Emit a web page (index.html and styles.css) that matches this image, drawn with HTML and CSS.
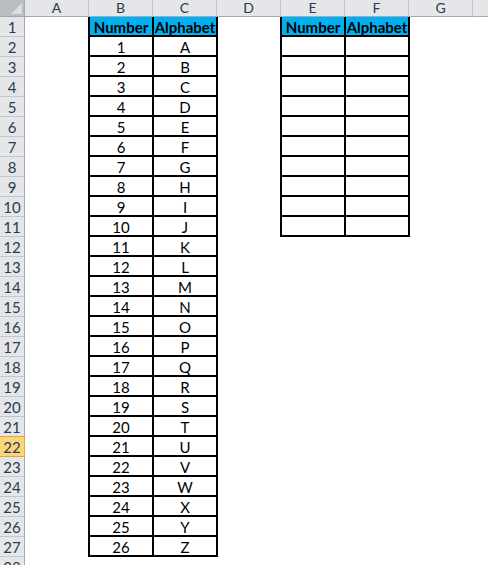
FILE: index.html
```html
<!DOCTYPE html>
<html>
<head>
<meta charset="utf-8">
<link rel="stylesheet" href="styles.css">
</head>
<body>
<div class="sheet">
  <div class="corner"><span class="tri"></span></div>
  <div class="ch">A</div><div class="ch">B</div><div class="ch">C</div><div class="ch">D</div><div class="ch">E</div><div class="ch">F</div><div class="ch">G</div><div class="ch"></div>

  <div class="rh r1">1</div><div class="rh r2">2</div><div class="rh r3">3</div><div class="rh r4">4</div><div class="rh r5">5</div><div class="rh r6">6</div><div class="rh r7">7</div><div class="rh r8">8</div><div class="rh r9">9</div><div class="rh r10">10</div>
  <div class="rh r11">11</div><div class="rh r12">12</div><div class="rh r13">13</div><div class="rh r14">14</div><div class="rh r15">15</div><div class="rh r16">16</div><div class="rh r17">17</div><div class="rh r18">18</div><div class="rh r19">19</div><div class="rh r20">20</div>
  <div class="rh r21">21</div><div class="rh r22 active">22</div><div class="rh r23">23</div><div class="rh r24">24</div><div class="rh r25">25</div><div class="rh r26">26</div><div class="rh r27">27</div><div class="rh r28">28</div>

  <div class="tbl tbl-left">
    <div class="c hd">Number</div><div class="c hd">Alphabet</div>
    <div class="c">1</div><div class="c">A</div>
    <div class="c">2</div><div class="c">B</div>
    <div class="c">3</div><div class="c">C</div>
    <div class="c">4</div><div class="c">D</div>
    <div class="c">5</div><div class="c">E</div>
    <div class="c">6</div><div class="c">F</div>
    <div class="c">7</div><div class="c">G</div>
    <div class="c">8</div><div class="c">H</div>
    <div class="c">9</div><div class="c">I</div>
    <div class="c">10</div><div class="c">J</div>
    <div class="c">11</div><div class="c">K</div>
    <div class="c">12</div><div class="c">L</div>
    <div class="c">13</div><div class="c">M</div>
    <div class="c">14</div><div class="c">N</div>
    <div class="c">15</div><div class="c">O</div>
    <div class="c">16</div><div class="c">P</div>
    <div class="c">17</div><div class="c">Q</div>
    <div class="c">18</div><div class="c">R</div>
    <div class="c">19</div><div class="c">S</div>
    <div class="c">20</div><div class="c">T</div>
    <div class="c">21</div><div class="c">U</div>
    <div class="c">22</div><div class="c">V</div>
    <div class="c">23</div><div class="c">W</div>
    <div class="c">24</div><div class="c">X</div>
    <div class="c">25</div><div class="c">Y</div>
    <div class="c">26</div><div class="c">Z</div>
  </div>

  <div class="tbl tbl-right">
    <div class="c hd">Number</div><div class="c hd">Alphabet</div>
    <div class="c"></div><div class="c"></div>
    <div class="c"></div><div class="c"></div>
    <div class="c"></div><div class="c"></div>
    <div class="c"></div><div class="c"></div>
    <div class="c"></div><div class="c"></div>
    <div class="c"></div><div class="c"></div>
    <div class="c"></div><div class="c"></div>
    <div class="c"></div><div class="c"></div>
    <div class="c"></div><div class="c"></div>
    <div class="c"></div><div class="c"></div>
  </div>
</div>
</body>
</html>
```

FILE: styles.css
```css
html, body {
  margin: 0;
  padding: 0;
  background: #ffffff;
  overflow: hidden;
}

.sheet {
  display: grid;
  grid-template-columns: 25px repeat(8, 64px);
  grid-template-rows: 17px repeat(28, 20px);
  width: 488px;
  height: 565px;
  overflow: hidden;
  font-family: "Lato", "Open Sans", sans-serif;
  font-size: 15px;
  background: #ffffff;
}

.corner {
  grid-column: 1;
  grid-row: 1;
  background: #b9bcc1;
  border-right: 1px solid #a4a9b1;
  border-bottom: 1px solid #a4a9b1;
  box-sizing: border-box;
  position: relative;
}

.corner .tri {
  position: absolute;
  right: 2px;
  bottom: 2px;
  width: 0;
  height: 0;
  border-left: 11px solid transparent;
  border-bottom: 11px solid #dcdee2;
}

.ch {
  grid-row: 1;
  background: #e4e6ea;
  border-right: 1px solid #c3c7ce;
  border-bottom: 1px solid #a4a9b1;
  box-sizing: border-box;
  color: #2c3a4e;
  text-align: center;
  line-height: 16px;
  font-size: 14px;
}

.rh {
  grid-column: 1;
  background: #e4e6ea;
  border-right: 1px solid #a4a9b1;
  border-bottom: 1px solid #c3c7ce;
  box-sizing: border-box;
  color: #2c3a4e;
  text-align: center;
  line-height: 20px;
}

.rh.active {
  background: #f9d67a;
  border-right: 1px solid #e9a53a;
  border-bottom: 1px solid #e9a53a;
  border-top: 1px solid #e9a53a;
  margin-top: -1px;
}

.r1 { grid-row: 2; } .r2 { grid-row: 3; } .r3 { grid-row: 4; } .r4 { grid-row: 5; }
.r5 { grid-row: 6; } .r6 { grid-row: 7; } .r7 { grid-row: 8; } .r8 { grid-row: 9; }
.r9 { grid-row: 10; } .r10 { grid-row: 11; } .r11 { grid-row: 12; } .r12 { grid-row: 13; }
.r13 { grid-row: 14; } .r14 { grid-row: 15; } .r15 { grid-row: 16; } .r16 { grid-row: 17; }
.r17 { grid-row: 18; } .r18 { grid-row: 19; } .r19 { grid-row: 20; } .r20 { grid-row: 21; }
.r21 { grid-row: 22; } .r22 { grid-row: 23; } .r23 { grid-row: 24; } .r24 { grid-row: 25; }
.r25 { grid-row: 26; } .r26 { grid-row: 27; } .r27 { grid-row: 28; } .r28 { grid-row: 29; }

.tbl {
  display: grid;
  grid-template-columns: 64px 64px;
  grid-auto-rows: 20px;
  width: 130px;
  margin-left: -1px;
  border-left: 2px solid #000;
  justify-self: start;
  align-self: start;
  box-sizing: content-box;
  z-index: 1;
}

.tbl-left {
  grid-column: 3 / span 2;
  grid-row: 2 / span 27;
}

.tbl-right {
  grid-column: 6 / span 2;
  grid-row: 2 / span 11;
}

.c {
  box-sizing: border-box;
  border-right: 2px solid #000;
  border-bottom: 2px solid #000;
  text-align: center;
  padding-top: 1px;
  line-height: 18px;
  color: #000;
  background: #ffffff;
}

.c.hd {
  background: #00b0f0;
  font-weight: bold;
}
```
